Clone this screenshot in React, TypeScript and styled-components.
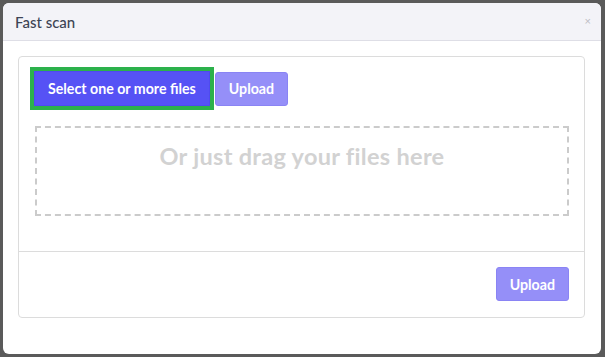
import React from 'react';
import styled, { createGlobalStyle } from 'styled-components';

const GlobalStyle = createGlobalStyle`
  *, *::before, *::after {
    box-sizing: border-box;
  }
  html, body {
    margin: 0;
    padding: 0;
    background: #5a5a5a;
  }
  body {
    font-family: Lato, "Open Sans", sans-serif;
  }
  #root {
    padding: 3px 4px 3px 3px;
  }
`;

const Modal = styled.div`
  width: 598px;
  height: 351px;
  background: #fff;
  border-radius: 6px;
  overflow: hidden;
  display: flex;
  flex-direction: column;
`;

const Header = styled.div`
  height: 38px;
  background: #f3f3f8;
  border-bottom: 1px solid #dedee6;
  display: flex;
  align-items: center;
  justify-content: space-between;
  padding: 0 10px 0 12px;
`;

const Title = styled.h5`
  margin: 0;
  font-size: 15px;
  font-weight: 500;
  color: #3d4455;
`;

const Close = styled.button`
  border: 0;
  background: none;
  padding: 0;
  font-size: 11px;
  line-height: 1;
  color: #bdbdc4;
  cursor: pointer;
`;

const Body = styled.div`
  padding: 15px 16px 0 15px;
`;

const Panel = styled.div`
  border: 1px solid #dcdcdc;
  border-radius: 4px;
  background: #fff;
`;

const Top = styled.div`
  padding: 14px 15px 35px 15px;
`;

const Actions = styled.div`
  display: flex;
  align-items: center;
  gap: 5px;
`;

const Button = styled.button<{ $primary?: boolean; $focused?: boolean }>`
  height: ${p => (p.$focused ? '35px' : '34px')};
  padding: 0 13px;
  border-radius: ${p => (p.$focused ? '0' : '3px')};
  border: 1px solid ${p => (p.$primary ? '#4f4af0' : '#8a84f4')};
  background: ${p => (p.$primary ? '#5652f5' : '#958ff8')};
  color: #fff;
  font-family: Lato, sans-serif;
  font-size: 14.2px;
  font-weight: 700;
  cursor: pointer;
  outline: ${p => (p.$focused ? '4px solid #2cb14b' : 'none')};
`;

const Dropzone = styled.div`
  margin: 20px 0 0 1px;
  height: 90px;
  border: 2px dashed #cbcbcb;
  display: flex;
  justify-content: center;
  padding-top: 14px;
  color: #d2d2d2;
  font-size: 23.5px;
  letter-spacing: 0.3px;
  font-weight: 700;
`;

const Footer = styled.div`
  border-top: 1px solid #dcdcdc;
  display: flex;
  justify-content: flex-end;
  padding: 15px 15px 16px;
`;

export default function App() {
  return (
    <>
      <GlobalStyle />
      <Modal>
        <Header>
          <Title>Fast scan</Title>
          <Close aria-label="Close">×</Close>
        </Header>
        <Body>
          <Panel>
            <Top>
              <Actions>
                <Button $primary $focused>Select one or more files</Button>
                <Button>Upload</Button>
              </Actions>
              <Dropzone>Or just drag your files here</Dropzone>
            </Top>
            <Footer>
              <Button>Upload</Button>
            </Footer>
          </Panel>
        </Body>
      </Modal>
    </>
  );
}
